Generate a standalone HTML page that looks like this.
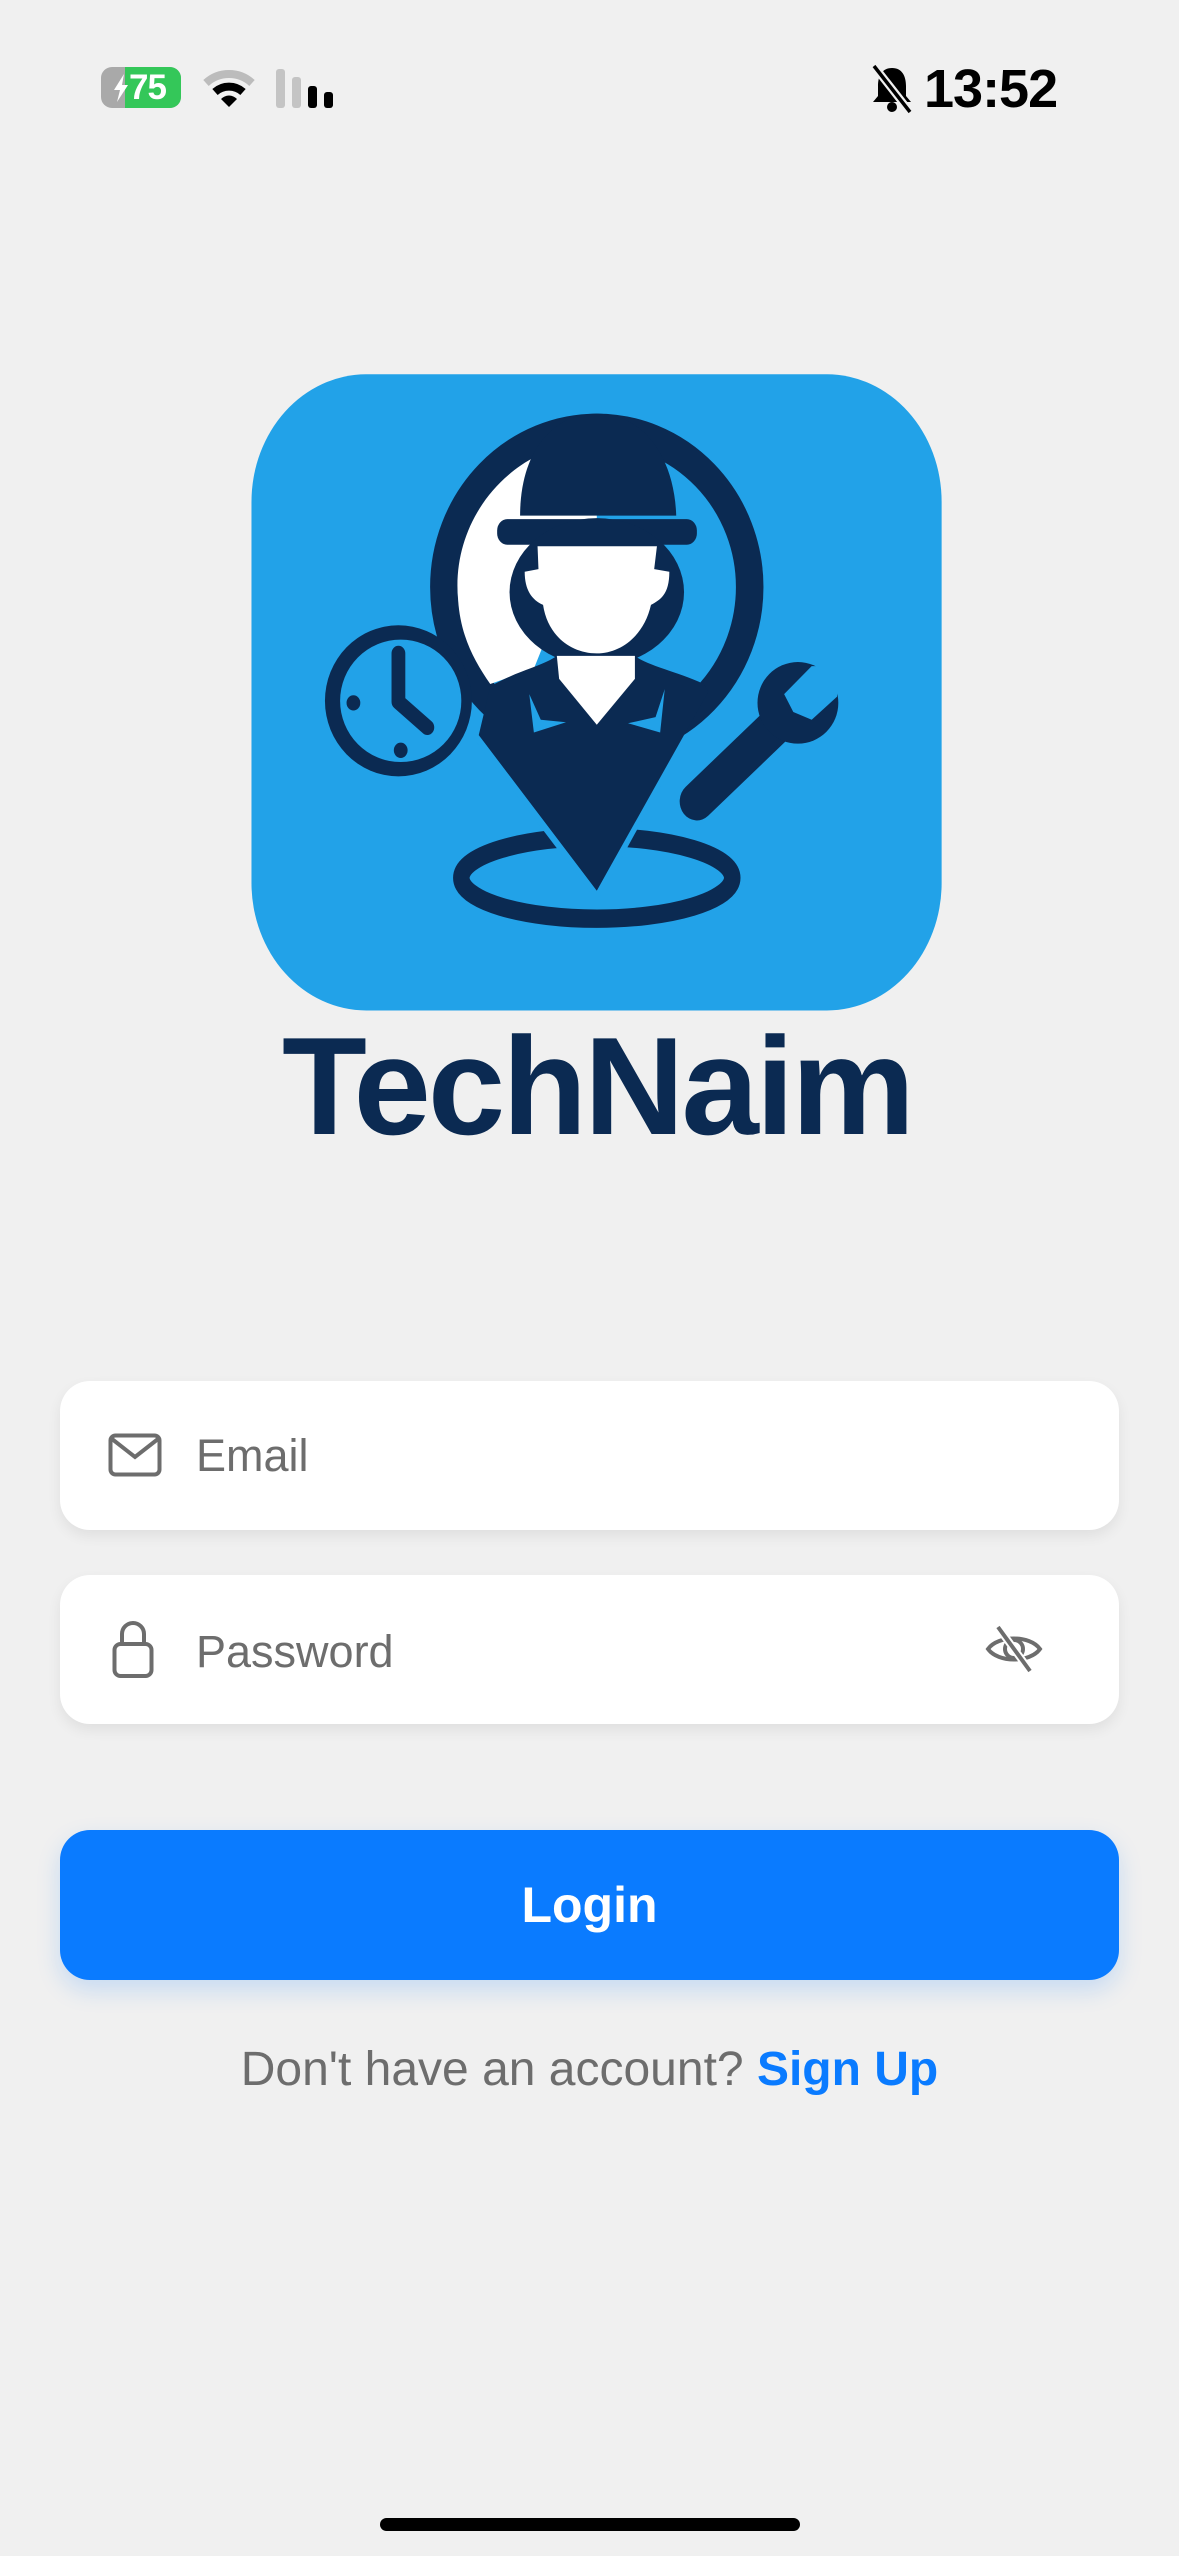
<!DOCTYPE html>
<html><head><meta charset="utf-8"><style>
html,body{margin:0;padding:0}
body{width:1179px;height:2556px;background:#f0f0f0;position:relative;overflow:hidden;font-family:"Liberation Sans",sans-serif}
.abs{position:absolute}
.field{position:absolute;left:60px;width:1059px;height:149px;background:#fff;border-radius:30px;box-shadow:0 6px 14px rgba(0,0,0,0.07)}
.ph{position:absolute;left:136px;top:0;line-height:149px;font-size:45px;color:#6d6d6d}
</style></head><body>
<div class="abs" style="left:101px;top:67px;width:80px;height:41px;border-radius:11px;background:#a9a9a9;overflow:hidden">
  <div class="abs" style="left:24px;top:0;width:56px;height:41px;background:#34c759"></div>
  <svg class="abs" style="left:12px;top:7px" width="16" height="28" viewBox="0 0 16 28"><path d="M11 0 L1 16 L7 16 L4 28 L15 11 L9 11 Z" fill="#fff"/></svg>
  <div class="abs" style="left:28px;top:0;line-height:41px;color:#fff;font-weight:bold;font-size:35px;letter-spacing:-1px">75</div>
</div>
<svg class="abs" style="left:202px;top:68px" width="54" height="40" viewBox="0 0 54 40">
  <path d="M4 15 A34 34 0 0 1 50 15" stroke="#bcbcbc" stroke-width="8" fill="none"/>
  <path d="M13 24 A21 21 0 0 1 41 24" stroke="#000" stroke-width="8" fill="none"/>
  <path d="M27 39 L19 31 A11 11 0 0 1 35 31 Z" fill="#000"/>
</svg>
<div class="abs" style="left:276px;top:69px;width:9px;height:39px;background:#c4c4c4;border-radius:3px"></div>
<div class="abs" style="left:292px;top:77px;width:9px;height:31px;background:#c4c4c4;border-radius:3px"></div>
<div class="abs" style="left:308px;top:86px;width:9px;height:22px;background:#000;border-radius:3px"></div>
<div class="abs" style="left:324px;top:92px;width:9px;height:16px;background:#000;border-radius:3px"></div>
<svg class="abs" style="left:870px;top:64px" width="44" height="50" viewBox="0 0 44 50">
  <path d="M22 4 C12 4 8 12 8 22 L8 32 L3 38 L41 38 L36 32 L36 22 C36 12 32 4 22 4Z" fill="#000"/>
  <circle cx="22" cy="43" r="5" fill="#000"/>
  <line x1="4" y1="2" x2="40" y2="48" stroke="#f0f0f0" stroke-width="8"/>
  <line x1="4" y1="2" x2="40" y2="48" stroke="#000" stroke-width="3.5"/>
</svg>
<div class="abs" style="left:924px;top:58px;font-size:54px;font-weight:bold;color:#000;letter-spacing:-1px">13:52</div>

<svg class="abs" style="left:240px;top:360px" width="720" height="800" viewBox="0 0 1568 1568" preserveAspectRatio="none">
  <rect x="25" y="28" width="1503" height="1247" rx="250" fill="#22a2e8"/>
  <ellipse cx="777" cy="1015" rx="295" ry="80" fill="none" stroke="#0b2a52" stroke-width="36"/>
  <path d="M520 735 L777 1040 L1020 640 Z" fill="#0b2a52" stroke="#22a2e8" stroke-width="26" stroke-linejoin="round"/>
  <path d="M520 735 L777 1040 L1020 640 Z" fill="#0b2a52"/>
  <ellipse cx="777" cy="445" rx="333" ry="310" fill="none" stroke="#0b2a52" stroke-width="60"/>
  <path d="M715 165 C560 200 460 330 475 470 C480 540 510 590 545 635 L640 605 L660 560 L777 470 L777 165 Z" fill="#fff"/>
  <path d="M545 640 C600 610 660 600 690 580 L860 580 C890 600 950 610 1010 635 L1020 650 L777 1040 L520 735 Z" fill="#0b2a52"/>
  <path d="M610 305 C610 180 680 105 777 105 C870 105 945 180 950 305 Z" fill="#0b2a52"/>
  <rect x="560" y="312" width="435" height="50" rx="22" fill="#0b2a52"/>
  <ellipse cx="777" cy="455" rx="190" ry="145" fill="#0b2a52"/>
  <path d="M648 365 L908 365 L902 410 L935 415 C935 460 915 470 895 480 C880 540 830 575 777 575 C720 575 670 540 660 480 C635 470 620 450 620 415 L650 410 Z" fill="#fff"/>
  <path d="M690 580 L860 580 L860 625 L777 715 L695 625 Z" fill="#fff"/>
  <path d="M630 655 L640 730 L710 710 L655 705 Z" fill="#22a2e8"/>
  <path d="M925 645 L915 730 L845 712 L905 700 Z" fill="#22a2e8"/>
  <ellipse cx="345" cy="668" rx="160" ry="148" fill="#0b2a52"/>
  <ellipse cx="350" cy="668" rx="132" ry="120" fill="#22a2e8"/>
  <path d="M345 575 L345 670 L408 720" stroke="#0b2a52" stroke-width="30" fill="none" stroke-linecap="round" stroke-linejoin="round"/>
  <circle cx="247" cy="672" r="15" fill="#0b2a52"/>
  <circle cx="350" cy="765" r="15" fill="#0b2a52"/>
  <line x1="995" y1="865" x2="1180" y2="705" stroke="#0b2a52" stroke-width="75" stroke-linecap="round"/>
  <ellipse cx="1215" cy="672" rx="88" ry="80" fill="#0b2a52"/>
  <path d="M1185 655 L1245 600 L1310 600 L1300 660 L1245 705 L1205 690 Z" fill="#22a2e8"/>
</svg>
<div class="abs" style="left:277px;top:1017px;width:640px;text-align:center;font-size:139px;line-height:1;font-weight:bold;color:#0b2a52;letter-spacing:-3px;white-space:nowrap">TechNaim</div>

<div class="field" style="top:1381px">
  <svg class="abs" style="left:48px;top:52px" width="54" height="44" viewBox="0 0 54 44">
    <rect x="2.5" y="2.5" width="49" height="39" rx="5" fill="none" stroke="#6d6d6d" stroke-width="4"/>
    <path d="M4 6 L27 24 L50 6" fill="none" stroke="#6d6d6d" stroke-width="4"/>
  </svg>
  <div class="ph">Email</div>
</div>
<div class="field" style="top:1575px">
  <svg class="abs" style="left:52px;top:46px" width="42" height="58" viewBox="0 0 42 58">
    <path d="M10 24 L10 13 A11 11 0 0 1 32 13 L32 24" fill="none" stroke="#6d6d6d" stroke-width="4"/>
    <rect x="2.5" y="23" width="37" height="32" rx="6" fill="none" stroke="#6d6d6d" stroke-width="4"/>
  </svg>
  <div class="ph" style="top:2px">Password</div>
  <svg class="abs" style="left:924px;top:48px" width="60" height="52" viewBox="0 0 60 52">
    <path d="M4 26 C14 12 46 12 56 26 C46 40 14 40 4 26Z" fill="none" stroke="#6d6d6d" stroke-width="4"/>
    <circle cx="30" cy="26" r="9" fill="none" stroke="#6d6d6d" stroke-width="4"/>
    <line x1="14" y1="4" x2="46" y2="48" stroke="#fff" stroke-width="8"/>
    <line x1="14" y1="4" x2="46" y2="48" stroke="#6d6d6d" stroke-width="4"/>
  </svg>
</div>
<div class="abs" style="left:60px;top:1830px;width:1059px;height:150px;background:#0a7bff;border-radius:30px;box-shadow:0 10px 24px rgba(10,123,255,0.18);color:#fff;font-weight:bold;font-size:50px;line-height:150px;text-align:center">Login</div>
<div class="abs" style="left:0;top:2040px;width:1179px;text-align:center;font-size:48px;color:#6d6d6d;line-height:60px">Don't have an account? <span style="color:#0a7bff;font-weight:bold">Sign Up</span></div>
<div class="abs" style="left:380px;top:2518px;width:420px;height:13px;border-radius:7px;background:#000"></div>
</body></html>
